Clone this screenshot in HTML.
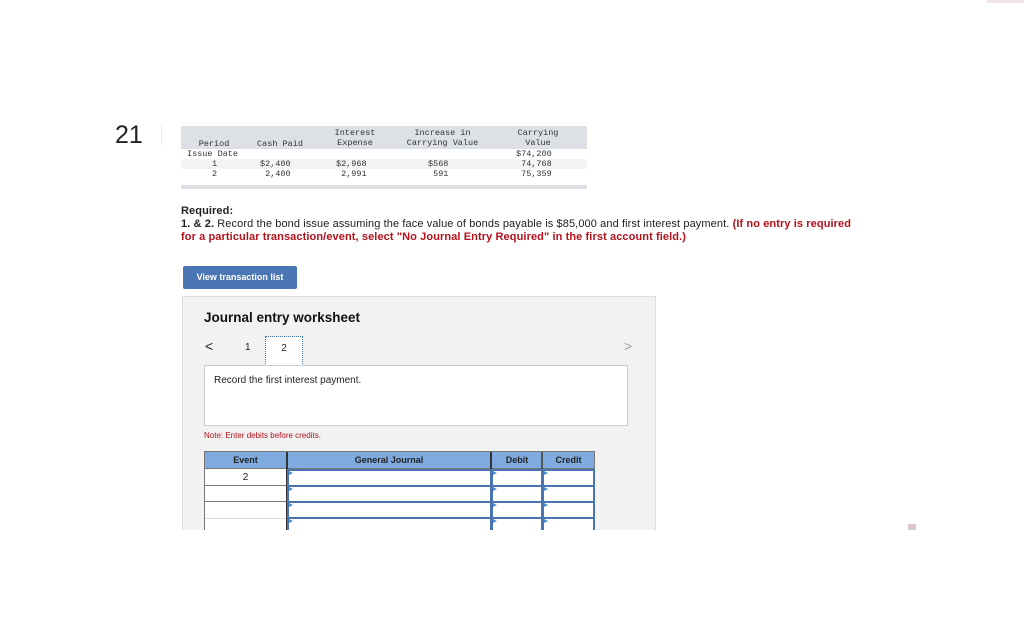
<!DOCTYPE html>
<html><head><meta charset="utf-8"><style>
*{margin:0;padding:0;box-sizing:border-box}
body{width:1024px;height:640px;background:#fff;position:relative;overflow:hidden;font-family:"Liberation Sans",sans-serif;color:#222}
.a{position:absolute}
.m{font-family:"Liberation Mono",monospace;font-size:8.5px;color:#333;white-space:pre;line-height:10px}
.c{text-align:center}
.r{text-align:right}
.in{position:absolute;border:2px solid #4a74b0;background:#fff}
.in:before{content:"";position:absolute;left:0;top:0;border-left:4px solid #4a90d9;border-top:2px solid transparent;border-bottom:2px solid transparent}
</style></head><body>
<div class="a" style="left:987px;top:0;width:37px;height:3px;background:#efe4e2"></div>
<div class="a" style="left:115px;top:120px;font-size:25px;color:#222;line-height:30px">21</div>
<div class="a" style="left:161px;top:125px;width:1px;height:20px;background:#eee"></div>

<div class="a" style="left:181px;top:126px;width:406px;height:23px;background:#dde1e6"></div>
<div class="a" style="left:181px;top:159px;width:406px;height:10px;background:#f4f4f4"></div>
<div class="a" style="left:181px;top:185px;width:406px;height:4px;background:#dde1e6"></div>
<div class="a m c" style="left:184px;top:139px;width:60px">Period</div>
<div class="a m c" style="left:250px;top:139px;width:60px">Cash Paid</div>
<div class="a m c" style="left:320px;top:128px;width:70px">Interest
Expense</div>
<div class="a m c" style="left:395px;top:128px;width:95px">Increase in
Carrying Value</div>
<div class="a m c" style="left:505px;top:128px;width:66px">Carrying
Value</div>
<div class="a m" style="left:187px;top:149px">Issue Date</div>
<div class="a m" style="left:212px;top:159px">1
2</div>
<div class="a m" style="left:260px;top:159px">$2,400
 2,400</div>
<div class="a m" style="left:336px;top:159px">$2,968
 2,991</div>
<div class="a m" style="left:428px;top:159px">$568
 591</div>
<div class="a m" style="left:516px;top:149px">$74,200
 74,768
 75,359</div>

<div class="a" style="left:181px;top:205px;font-size:11px;line-height:13px;width:700px;letter-spacing:0.1px;white-space:nowrap">
<b>Required:</b><br><b>1. &amp; 2.</b> Record the bond issue assuming the face value of bonds payable is $85,000 and first interest payment. <b style="color:#b5121b">(If no entry is required<br>for a particular transaction/event, select "No Journal Entry Required" in the first account field.)</b></div>

<div class="a" style="left:183px;top:266px;width:114px;height:23px;background:#4a76b6;border-radius:2px;color:#fff;font-size:9px;font-weight:bold;text-align:center;line-height:23px">View transaction list</div>

<div class="a" style="left:182px;top:296px;width:474px;height:234px;background:#f2f2f2;border:1px solid #ddd;border-bottom:none"></div>
<div class="a" style="left:204px;top:310px;font-size:13.5px;font-weight:bold;color:#111">Journal entry worksheet</div>
<div class="a" style="left:205px;top:338px;font-size:14px;color:#222">&lt;</div>
<div class="a" style="left:245px;top:342px;font-size:10px">1</div>
<div class="a" style="left:265px;top:336px;width:38px;height:30px;background:#fff;border:1px dotted #3a6fb5;font-size:10px;text-align:center;line-height:24px">2</div>
<div class="a" style="left:624px;top:338px;font-size:14px;color:#999">&gt;</div>
<div class="a" style="left:204px;top:365px;width:424px;height:61px;background:#fff;border:1px solid #ccc"></div>
<div class="a" style="left:214px;top:375px;font-size:10px">Record the first interest payment.</div>
<div class="a" style="left:204px;top:431px;font-size:8px;color:#b5121b">Note: Enter debits before credits.</div>

<div class="a" style="left:204px;top:451px;width:391px;height:79px;background:#fff;border-left:1px solid #777;border-right:1px solid #777;border-top:1px solid #777"></div>
<div class="a" style="left:205px;top:452px;width:389px;height:17px;background:#80abe0;border-bottom:1px solid #777"></div>
<div class="a" style="left:286px;top:452px;width:2px;height:78px;background:#333"></div>
<div class="a" style="left:490px;top:452px;width:2px;height:17px;background:#333"></div>
<div class="a" style="left:541px;top:452px;width:2px;height:17px;background:#555"></div>
<div class="a c" style="left:205px;top:455px;width:81px;font-size:9px;font-weight:bold;color:#222">Event</div>
<div class="a c" style="left:288px;top:455px;width:202px;font-size:9px;font-weight:bold;color:#222">General Journal</div>
<div class="a c" style="left:492px;top:455px;width:50px;font-size:9px;font-weight:bold;color:#222">Debit</div>
<div class="a c" style="left:543px;top:455px;width:51px;font-size:9px;font-weight:bold;color:#222">Credit</div>
<div class="a c" style="left:205px;top:472px;width:81px;font-size:10px">2</div>
<div class="a" style="left:205px;top:485px;width:81px;height:1px;background:#777"></div>
<div class="a" style="left:205px;top:501px;width:81px;height:1px;background:#777"></div>
<div class="a" style="left:205px;top:518px;width:81px;height:1px;background:#ddd"></div>

<div class="in" style="left:287px;top:469px;width:205px;height:18px"></div>
<div class="in" style="left:287px;top:485px;width:205px;height:18px"></div>
<div class="in" style="left:287px;top:501px;width:205px;height:18px"></div>
<div class="in" style="left:287px;top:517px;width:205px;height:18px"></div>
<div class="in" style="left:491px;top:469px;width:52px;height:18px"></div>
<div class="in" style="left:491px;top:485px;width:52px;height:18px"></div>
<div class="in" style="left:491px;top:501px;width:52px;height:18px"></div>
<div class="in" style="left:491px;top:517px;width:52px;height:18px"></div>
<div class="in" style="left:542px;top:469px;width:53px;height:18px"></div>
<div class="in" style="left:542px;top:485px;width:53px;height:18px"></div>
<div class="in" style="left:542px;top:501px;width:53px;height:18px"></div>
<div class="in" style="left:542px;top:517px;width:53px;height:18px"></div>
<div class="a" style="left:0;top:530px;width:1024px;height:110px;background:#fff"></div>
<div class="a" style="left:908px;top:524px;width:8px;height:6px;background:#d8c8cc"></div>
</body></html>
